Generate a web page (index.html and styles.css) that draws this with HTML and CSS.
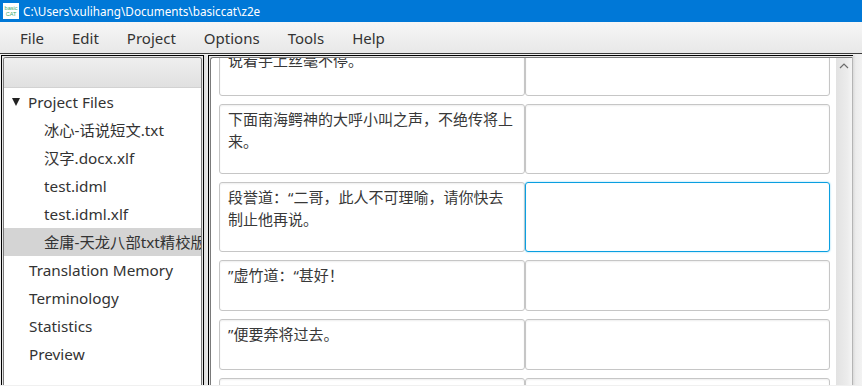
FILE: index.html
```html
<!DOCTYPE html>
<html lang="zh-CN">
<head>
  <meta charset="UTF-8">
  <title>C:\Users\xulihang\Documents\basiccat\z2e</title>
  <link rel="stylesheet" href="styles.css">
</head>
<body>

  <div class="titlebar">
    <svg class="app-icon" width="16" height="16" viewBox="0 0 16 16">
      <rect x="0" y="0" width="16" height="16" fill="#fff"/>
      <text x="8" y="7" text-anchor="middle" font-size="5.5" font-family="Liberation Sans, sans-serif" fill="#3aa86b">basic</text>
      <text x="8" y="13" text-anchor="middle" font-size="5.5" font-family="Liberation Sans, sans-serif" fill="#3aa86b">CAT</text>
    </svg>
    <span>C:\Users\xulihang\Documents\basiccat\z2e</span>
  </div>

  <div class="menubar">
    <span class="menu-item">File</span>
    <span class="menu-item">Edit</span>
    <span class="menu-item">Project</span>
    <span class="menu-item">Options</span>
    <span class="menu-item">Tools</span>
    <span class="menu-item">Help</span>
  </div>

  <div class="workspace">
    <div class="sidebar">
      <div class="sidebar-panel">
        <div class="sidebar-head"></div>
        <ul class="tree">
          <li class="tree-row top"><span class="toggle"></span>Project Files</li>
          <li class="tree-row child">冰心-话说短文.txt</li>
          <li class="tree-row child">汉字.docx.xlf</li>
          <li class="tree-row child">test.idml</li>
          <li class="tree-row child">test.idml.xlf</li>
          <li class="tree-row child selected">金庸-天龙八部txt精校版.txt</li>
          <li class="tree-row leaf">Translation Memory</li>
          <li class="tree-row leaf">Terminology</li>
          <li class="tree-row leaf">Statistics</li>
          <li class="tree-row leaf">Preview</li>
        </ul>
      </div>
    </div>

    <div class="divider"></div>

    <div class="editor">
      <div class="editor-panel">
        <div class="segments">
          <div class="segment-list">
            <div class="row one">
              <div class="cell">说着手上丝毫不停。</div>
              <div class="cell target"></div>
            </div>
            <div class="row two">
              <div class="cell">下面南海鳄神的大呼小叫之声，不绝传将上来。</div>
              <div class="cell target"></div>
            </div>
            <div class="row two">
              <div class="cell">段誉道：“二哥，此人不可理喻，请你快去制止他再说。</div>
              <div class="cell target focused"></div>
            </div>
            <div class="row one">
              <div class="cell">”虚竹道：“甚好！</div>
              <div class="cell target"></div>
            </div>
            <div class="row one">
              <div class="cell">”便要奔将过去。</div>
              <div class="cell target"></div>
            </div>
            <div class="row one">
              <div class="cell"></div>
              <div class="cell target"></div>
            </div>
          </div>
        </div>
        <div class="scrollbar">
          <svg class="scroll-arrow" width="10" height="6" viewBox="0 0 10 6">
            <polyline points="1,5 5,1 9,5" fill="none" stroke="#6e6e6e" stroke-width="1.2"/>
          </svg>
        </div>
      </div>
    </div>

    <div class="edge"></div>
  </div>

</body>
</html>
```

FILE: styles.css
```css
body {
  margin: 0;
  width: 862px;
  height: 386px;
  overflow: hidden;
  background-color: #f0f0f0;
  font-family: "Noto Sans", "Noto Sans CJK SC", sans-serif;
  color: #333;
}

.titlebar {
  height: 22px;
  display: flex;
  align-items: center;
  gap: 4px;
  padding-left: 3px;
  background-color: #0078d7;
  color: #fff;
  font-size: 11.7px;
}

.app-icon {
  flex-shrink: 0;
}

.menubar {
  height: 31px;
  display: flex;
  align-items: center;
  padding-left: 6px;
  background: linear-gradient(#f6f6f6, #e8e8e8);
  border-bottom: 1px solid #3c3c3c;
  font-size: 15px;
}

.menu-item {
  padding: 0 14px;
}

.workspace {
  display: flex;
  height: 331px;
  padding-top: 1px;
  box-sizing: border-box;
}

.sidebar {
  width: 203px;
  margin-left: 1px;
  box-sizing: border-box;
  border: 1px solid #000;
  border-bottom: none;
  padding: 1px 1px 0 1px;
  background-color: #e8e8e8;
}

.sidebar-panel {
  height: 100%;
  box-sizing: border-box;
  border: 1px solid #7a7a7a;
  border-bottom: none;
  border-radius: 3px 3px 0 0;
  background-color: #fff;
  overflow: hidden;
}

.sidebar-head {
  height: 29px;
  background: linear-gradient(#efefef, #e0e0e0);
  border-bottom: 1px solid #d2d2d2;
}

.tree {
  list-style: none;
  margin: 0;
  padding: 0;
  font-size: 15.3px;
}

.tree-row {
  height: 28px;
  line-height: 28px;
  white-space: nowrap;
  overflow: hidden;
}

.tree-row.top {
  display: flex;
  align-items: center;
  padding-left: 8px;
}

.tree-row.child {
  padding-left: 40px;
}

.tree-row.leaf {
  padding-left: 25px;
}

.tree-row.selected {
  background-color: #d4d4d4;
}

.toggle {
  width: 0;
  height: 0;
  margin-right: 8px;
  border-left: 4.5px solid transparent;
  border-right: 4.5px solid transparent;
  border-top: 8px solid #222;
}

.divider {
  width: 4px;
  background: linear-gradient(to right, #dcdcdc, #ececec);
}

.editor {
  width: 645px;
  box-sizing: border-box;
  border: 1px solid #000;
  border-right: none;
  border-bottom: none;
  padding: 1px 0 0 1px;
  background-color: #e8e8e8;
}

.editor-panel {
  height: 100%;
  display: flex;
  box-sizing: border-box;
  border: 1px solid #7a7a7a;
  border-right-color: #b4b4b4;
  border-bottom: none;
  border-radius: 3px 0 0 0;
  background-color: #fff;
  overflow: hidden;
}

.segments {
  flex: 1;
  padding: 0 6px 0 8px;
  overflow: hidden;
}

.segment-list {
  margin-top: -13px;
}

.row {
  display: flex;
  margin-bottom: 8px;
}

.row.one {
  height: 51px;
}

.row.two {
  height: 70px;
}

.cell {
  width: 306px;
  box-sizing: border-box;
  border: 1px solid #c6c6c6;
  border-radius: 3px;
  box-shadow: inset 0 1px 2px rgba(0, 0, 0, 0.07);
  padding: 3px 8px;
  font-size: 15px;
  line-height: 22px;
  color: #383838;
}

.cell.target {
  width: 305px;
}

.cell.focused {
  border-color: #0a9fe0;
  box-shadow: 0 0 2px #7fd0f2, inset 0 0 1px #bfe6f8;
}

.scrollbar {
  width: 16px;
  display: flex;
  justify-content: center;
  padding-top: 5px;
  box-sizing: border-box;
  background: linear-gradient(to right, #e2e2e2, #ececec 70%, #f4f4f4);
}

.scroll-arrow {
  display: block;
}

.edge {
  flex: 1;
  background: linear-gradient(to right, #dadada, #ececec 30%, #f2f2f2);
}
```
